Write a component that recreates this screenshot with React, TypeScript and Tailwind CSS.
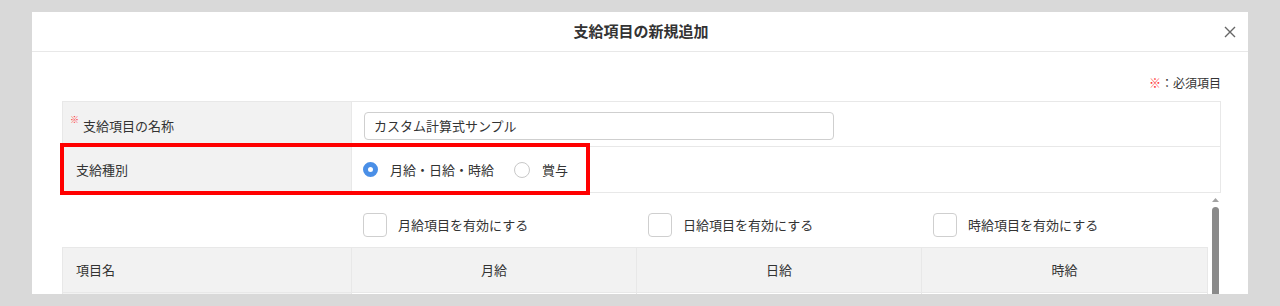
import React from 'react';

const font = { fontFamily: '"Noto Sans CJK JP", "Noto Sans", sans-serif' };

const Radio: React.FC<{ checked?: boolean; label: string }> = ({ checked, label }) => (
  <label className="flex items-center gap-[12px]">
    {checked ? (
      <span className="w-[15px] h-[15px] rounded-full border-[5px] border-[#4a8fe7] bg-white" />
    ) : (
      <span className="w-[16px] h-[16px] rounded-full border border-[#c8c8c8] bg-white" />
    )}
    <span>{label}</span>
  </label>
);

const Check: React.FC<{ label: string }> = ({ label }) => (
  <label className="flex items-center gap-[11px] pl-[11px]">
    <span className="w-[24px] h-[24px] rounded-[4px] border border-[#cfcfcf] bg-white" />
    <span>{label}</span>
  </label>
);

export default function App() {
  return (
    <div
      className="w-[1280px] h-[306px] bg-[#d9d9d9] pt-[12px] pl-[32px] overflow-hidden text-[#333] text-[13px]"
      style={font}
    >
      <div className="w-[1216px] h-[282px] bg-white flex flex-col overflow-hidden">
        {/* header */}
        <div className="h-[40px] shrink-0 border-b border-[#e8e8e8] flex items-center justify-between">
          <div className="w-[35px]" />
          <h2 className="text-[15px] font-bold text-[#333] pl-[2px]">支給項目の新規追加</h2>
          <button className="w-[35px] h-full flex items-center justify-center text-[#666]">
            <svg width="12" height="12" viewBox="0 0 12 12" fill="none" stroke="currentColor" strokeWidth="1.4">
              <path d="M1 1L11 11M11 1L1 11" />
            </svg>
          </button>
        </div>

        {/* body */}
        <div className="flex-1 min-h-0 pl-[30px] pr-[27px] pt-[22px] flex flex-col">
          <p className="text-right text-[12px] leading-[18px]">
            <span className="text-[#ff3333]">※</span>：必須項目
          </p>

          <div className="relative mt-[9px] border border-[#e8e8e8]">
            <div className="flex h-[45px] border-b border-[#e8e8e8]">
              <div className="w-[289px] bg-[#f2f2f2] border-r border-[#e8e8e8] flex items-center pt-[4px] pl-[7px]">
                <span className="text-[9px] text-[#ff3333] self-start mt-[7px] mr-[4px]">※</span>
                <span>支給項目の名称</span>
              </div>
              <div className="flex-1 flex items-center pt-[4px] pl-[12px]">
                <div className="w-[470px] h-[28px] border border-[#cfcfcf] rounded-[4px] flex items-center pl-[9px]">
                  カスタム計算式サンプル
                </div>
              </div>
            </div>
            <div className="flex h-[45px]">
              <div className="w-[289px] bg-[#f2f2f2] border-r border-[#e8e8e8] flex items-center pl-[13px]">
                支給種別
              </div>
              <div className="flex-1 flex items-center pl-[11px] gap-[20px]">
                <Radio checked label="月給・日給・時給" />
                <Radio label="賞与" />
              </div>
            </div>
            {/* annotation */}
            <div className="absolute left-[-3px] top-[41px] w-[530px] h-[52px] border-[4px] border-[#ff0000] pointer-events-none" />
          </div>

          {/* scrolling area */}
          <div className="flex-1 min-h-0 flex overflow-hidden">
            <div className="w-[1146px] pt-[20px]">
              <div className="grid grid-cols-[290px_285px_285px_286px] h-[24px] mb-[10px]">
                <div />
                <Check label="月給項目を有効にする" />
                <Check label="日給項目を有効にする" />
                <Check label="時給項目を有効にする" />
              </div>
              <div className="border border-[#e8e8e8]">
                <div className="grid grid-cols-[289px_285px_285px_285px] h-[45px] bg-[#f2f2f2] border-b border-[#e8e8e8]">
                  <div className="flex items-center pl-[13px] border-r border-[#e8e8e8]">項目名</div>
                  <div className="flex items-center justify-center border-r border-[#e8e8e8]">月給</div>
                  <div className="flex items-center justify-center border-r border-[#e8e8e8]">日給</div>
                  <div className="flex items-center justify-center">時給</div>
                </div>
                <div className="grid grid-cols-[289px_285px_285px_285px] h-[45px]">
                  <div className="bg-[#f2f2f2] border-r border-[#e8e8e8]" />
                  <div className="border-r border-[#e8e8e8]" />
                  <div className="border-r border-[#e8e8e8]" />
                  <div />
                </div>
              </div>
            </div>
            {/* scrollbar */}
            <div className="w-[13px] flex flex-col items-center pt-[5px] pl-[2px]">
              <svg width="7" height="4" viewBox="0 0 7 4" className="shrink-0">
                <path d="M3.5 0L7 4H0Z" fill="#a3a3a3" />
              </svg>
              <div className="mt-[5px] w-[7px] flex-1 rounded-t-[4px] bg-[#8a8a8a]" />
            </div>
          </div>
        </div>
      </div>
    </div>
  );
}
